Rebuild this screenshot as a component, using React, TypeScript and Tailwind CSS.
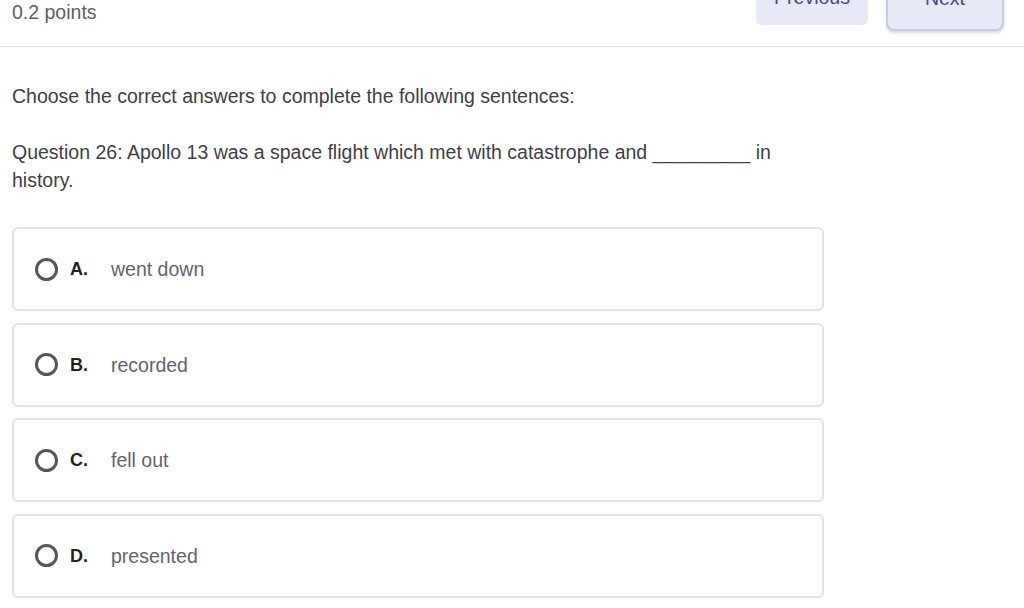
import React from "react";

const options = [
  { letter: "A.", text: "went down" },
  { letter: "B.", text: "recorded" },
  { letter: "C.", text: "fell out" },
  { letter: "D.", text: "presented" },
];

export default function App() {
  return (
    <div className="w-[1024px] h-[608px] overflow-hidden bg-white font-['Liberation_Sans',Arial,sans-serif]">
      {/* Header */}
      <div className="flex justify-between h-[47px] border-b border-[#e8e8ec] pl-3">
        <div className="pt-[1px] text-[19.5px] leading-[22px] text-[#5c5f6b]">0.2 points</div>
        <div className="flex items-start gap-[18px] mt-[-30px] mr-[20px]">
          <button className="h-[55px] w-[112px] rounded-md bg-[#e8e9f6] text-[19.5px] text-[#45478a] flex items-center justify-center">
            Previous
          </button>
          <button className="h-[61px] w-[118px] rounded-lg border-2 border-[#c8cae8] bg-[#e8e9f6] shadow-[0_2px_3px_rgba(90,95,160,0.25)] text-[19.5px] text-[#45478a] flex items-center justify-center pb-[4px]">
            Next
          </button>
        </div>
      </div>

      {/* Body */}
      <div className="px-3 text-[19.5px] leading-[28px] text-[#3d3f47]">
        <p className="mt-[35px]">Choose the correct answers to complete the following sentences:</p>
        <p className="mt-[28px] w-[790px]">
          Question 26: Apollo 13 was a space flight which met with catastrophe and _________ in history.
        </p>

        <div className="mt-[33px] flex flex-col gap-[11.5px]">
          {options.map((o) => (
            <div
              key={o.letter}
              className="w-[812px] h-[84px] rounded-md border-2 border-[#e3e3e8] flex items-center pl-[21px]"
            >
              <span className="w-[23px] h-[23px] rounded-full border-[3px] border-[#55565e] shrink-0" />
              <span className="ml-[12px] w-[41px] text-[18px] font-bold text-[#222]">{o.letter}</span>
              <span className="text-[19.5px] text-[#62636f]">{o.text}</span>
            </div>
          ))}
        </div>
      </div>
    </div>
  );
}
